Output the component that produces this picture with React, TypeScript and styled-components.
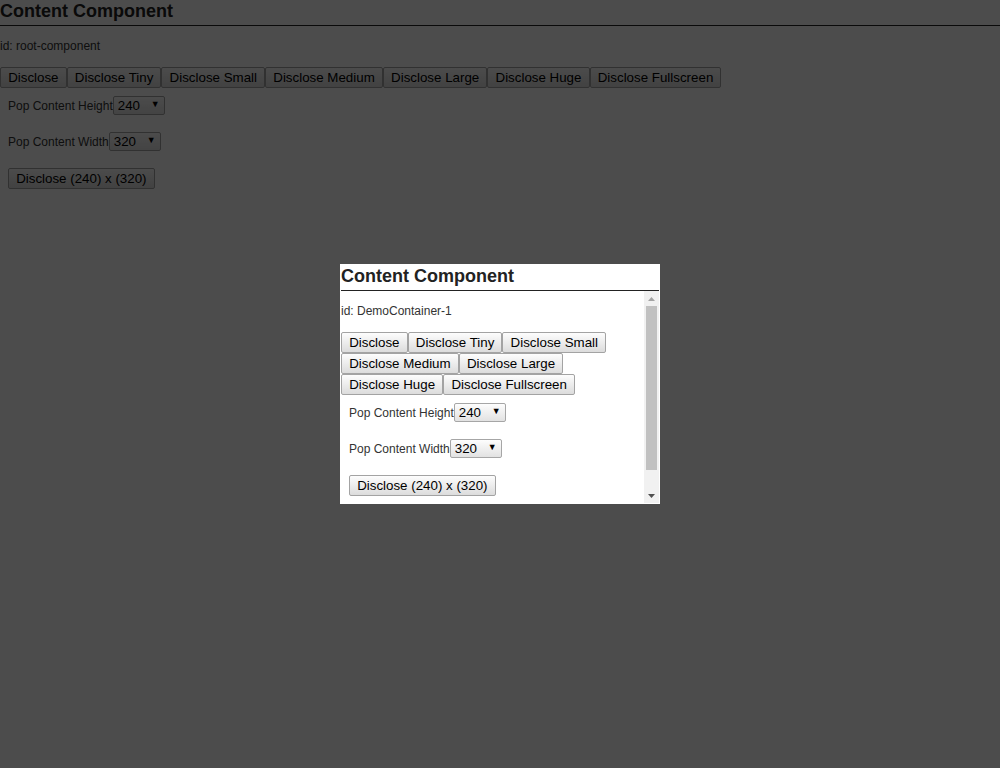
import { useState } from "react";
import styled, { createGlobalStyle } from "styled-components";

const GlobalStyle = createGlobalStyle`
  body {
    margin: 0;
    background: #fff;
    font-family: "Liberation Sans", Arial, sans-serif;
    color: #222;
  }
`;

const sizes = ["Tiny", "Small", "Medium", "Large", "Huge", "Fullscreen"];
const heights = ["120", "240", "360", "480"];
const widths = ["160", "320", "480", "640"];

const Title = styled.h2`
  margin: 0;
  padding: 1px 0 3px;
  font-size: 18px;
  font-weight: bold;
  line-height: 21px;
  color: #222;
  border-bottom: 1px solid #222;
`;

const IdLine = styled.div`
  margin: 13px 0 14px;
  font-size: 12px;
  line-height: 14px;
  color: #333;
`;

const ButtonBar = styled.div`
  display: flex;
  flex-wrap: wrap;
`;

const DiscloseButton = styled.button`
  height: 21px;
  margin: 0;
  padding: 0 7.15px;
  font-family: "Liberation Sans", Arial, sans-serif;
  font-size: 13.333px;
  color: #000;
  white-space: nowrap;
  border: 1px solid #a3a3a3;
  border-radius: 2px;
  background: linear-gradient(#fdfdfd, #dcdcdc);
  cursor: pointer;
`;

const Controls = styled.div`
  display: flex;
  flex-direction: column;
  align-items: flex-start;
  gap: 17px;
  padding: 8px 8px 30px;
`;

const Row = styled.label`
  display: flex;
  align-items: center;
  height: 19px;
  font-size: 12px;
  color: #333;
`;

const SelectWrap = styled.span`
  position: relative;
  display: inline-block;
  &::after {
    content: "▼";
    position: absolute;
    right: 5px;
    top: 3px;
    font-size: 9px;
    color: #000;
    pointer-events: none;
  }
`;

const Select = styled.select`
  appearance: none;
  width: 52px;
  height: 19px;
  margin: 0;
  padding: 0 0 0 4px;
  font-family: "Liberation Sans", Arial, sans-serif;
  font-size: 13.333px;
  color: #000;
  border: 1px solid #a6a6a6;
  border-radius: 2px;
  background: linear-gradient(#fdfdfd, #e2e2e2);
`;

const Backdrop = styled.div`
  position: fixed;
  inset: 0;
  display: flex;
  align-items: center;
  justify-content: center;
  background: rgba(0, 0, 0, 0.7);
`;

const Pop = styled.div<{ $w: number; $h: number }>`
  display: flex;
  flex-direction: column;
  box-sizing: border-box;
  width: ${(p) => p.$w}px;
  height: ${(p) => p.$h}px;
  border: 1px solid #fff;
  background: #fff;
`;

const PopBody = styled.div`
  flex: 1;
  min-height: 0;
  display: flex;
`;

const Viewport = styled.div`
  flex: 1;
  min-width: 0;
  overflow: hidden;
`;

const ScrollBar = styled.div`
  display: flex;
  flex-direction: column;
  width: 15px;
  background: #f1f1f1;
`;

const ArrowButton = styled.div`
  display: flex;
  align-items: center;
  justify-content: center;
  height: 15px;
  flex: none;
`;

const Track = styled.div`
  flex: 1;
  padding: 0 2px;
`;

const Thumb = styled.div<{ $size: number }>`
  height: ${(p) => p.$size}%;
  background: #c1c1c1;
`;

const Arrow = ({ up }: { up?: boolean }) => (
  <svg width="7" height="4" viewBox="0 0 7 4">
    <polygon
      points={up ? "0,4 3.5,0 7,4" : "0,0 7,0 3.5,4"}
      fill={up ? "#a3a3a3" : "#505050"}
    />
  </svg>
);

type ContentProps = { id: string; scroll?: boolean };

const ContentComponent = ({ id, scroll }: ContentProps) => {
  const [height, setHeight] = useState("240");
  const [width, setWidth] = useState("320");

  const body = (
    <>
      <IdLine>id: {id}</IdLine>
      <ButtonBar>
        <DiscloseButton>Disclose</DiscloseButton>
        {sizes.map((s) => (
          <DiscloseButton key={s}>Disclose {s}</DiscloseButton>
        ))}
      </ButtonBar>
      <Controls>
        <Row>
          Pop Content Height
          <SelectWrap>
            <Select value={height} onChange={(e) => setHeight(e.target.value)}>
              {heights.map((h) => (
                <option key={h}>{h}</option>
              ))}
            </Select>
          </SelectWrap>
        </Row>
        <Row>
          Pop Content Width
          <SelectWrap>
            <Select value={width} onChange={(e) => setWidth(e.target.value)}>
              {widths.map((w) => (
                <option key={w}>{w}</option>
              ))}
            </Select>
          </SelectWrap>
        </Row>
        <DiscloseButton>
          Disclose ({height}) x ({width})
        </DiscloseButton>
      </Controls>
    </>
  );

  return (
    <>
      <Title>Content Component</Title>
      {scroll ? (
        <PopBody>
          <Viewport>{body}</Viewport>
          <ScrollBar>
            <ArrowButton>
              <Arrow up />
            </ArrowButton>
            <Track>
              <Thumb $size={90} />
            </Track>
            <ArrowButton>
              <Arrow />
            </ArrowButton>
          </ScrollBar>
        </PopBody>
      ) : (
        body
      )}
    </>
  );
};

const App = () => {
  return (
    <>
      <GlobalStyle />
      <ContentComponent id="root-component" />
      <Backdrop>
        <Pop $w={320} $h={240}>
          <ContentComponent id="DemoContainer-1" scroll />
        </Pop>
      </Backdrop>
    </>
  );
};

export default App;
